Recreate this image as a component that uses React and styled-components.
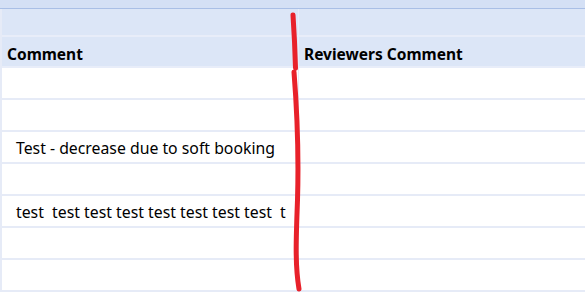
import React from "react";
import styled, { createGlobalStyle } from "styled-components";

const GlobalStyle = createGlobalStyle`
  html, body {
    margin: 0;
    padding: 0;
    background: #ffffff;
  }
  body {
    font-family: "Noto Sans", "Open Sans", sans-serif;
    color: #000;
  }
`;

const Wrapper = styled.div`
  position: relative;
  width: 585px;
  height: 292px;
  overflow: hidden;
  background: #ffffff;
`;

const TopBand = styled.div`
  height: 8px;
  background: #d4e0f5;
  border-bottom: 1px solid #a9bfe6;
`;

const Grid = styled.div`
  display: grid;
  grid-template-columns: 297px 1fr;
  border-left: 2px solid #e6ebf7;
`;

const HeaderCell = styled.div`
  height: ${(p) => p.$h}px;
  background: #dce6f7;
  border-bottom: 2px solid #e8edf9;
  border-right: ${(p) => (p.$last ? "none" : "1px solid #e8edf9")};
  display: flex;
  align-items: center;
  padding-top: ${(p) => (p.$h > 28 ? 5 : 0)}px;
  padding-left: 5px;
  font-size: 15.5px;
  font-weight: 700;
  box-sizing: border-box;
`;

const Cell = styled.div`
  height: 32px;
  box-sizing: border-box;
  border-bottom: 2px solid #e6ebf7;
  border-right: ${(p) => (p.$last ? "none" : "1px solid #e6ebf7")};
  display: flex;
  align-items: center;
  padding-left: 14px;
  padding-top: 1px;
  font-size: 15.8px;
  white-space: nowrap;
  overflow: hidden;
`;

const Scribble = styled.svg`
  position: absolute;
  left: 0;
  top: 0;
  pointer-events: none;
`;

const rows = [
  "",
  "",
  "Test - decrease due to soft booking",
  "",
  "test  test test test test test test test  t",
  "",
  "",
];

export default function App() {
  return (
    <>
      <GlobalStyle />
      <Wrapper>
        <TopBand />
        <Grid>
          <HeaderCell $h={28} />
          <HeaderCell $h={28} $last />
          <HeaderCell $h={31}>Comment</HeaderCell>
          <HeaderCell $h={31} $last>Reviewers Comment</HeaderCell>
          {rows.map((text, i) => (
            <React.Fragment key={i}>
              <Cell>{text.replace(/ /g, "\u00a0")}</Cell>
              <Cell $last />
            </React.Fragment>
          ))}
        </Grid>
        <Scribble width="585" height="292" viewBox="0 0 585 292">
          <g fill="none" stroke="#e8212a" strokeWidth="5" strokeLinecap="round">
            <path d="M293 15 C294 30 295 50 295.5 68" />
            <path d="M294 72 C297 110 299 150 297.5 200 C296 240 295 265 299 289" />
          </g>
        </Scribble>
      </Wrapper>
    </>
  );
}
